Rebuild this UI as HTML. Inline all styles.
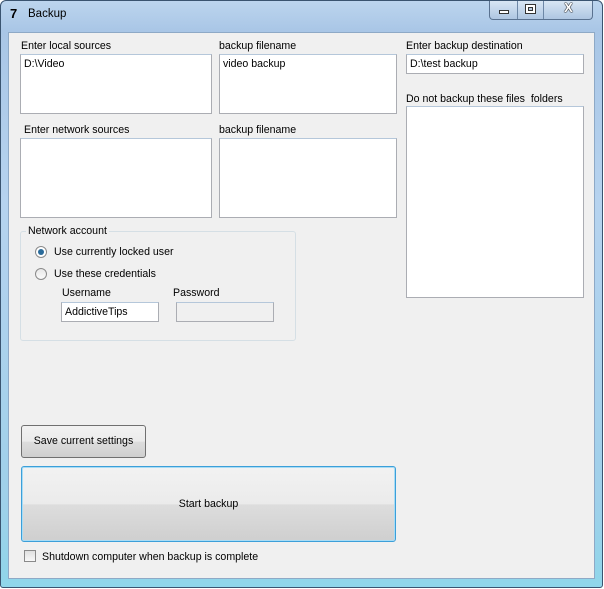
<!DOCTYPE html>
<html><head><style>
*{margin:0;padding:0;box-sizing:border-box}
body{width:604px;height:589px;background:#fff;font-family:"Liberation Sans",sans-serif;font-size:10.6px;color:#000;position:relative;overflow:hidden}
.frame{position:absolute;left:0;top:0;width:603px;height:588px;border:1px solid #3a5470;border-radius:6px 6px 3px 3px;background:linear-gradient(180deg,#bcd5ee 0,#a9c6e6 30px,#b6d3ef 200px,#9fd0ea 500px,#8fd6ea 588px)}
.client{position:absolute;left:8px;top:32px;width:587px;height:547px;background:#f0f0f0;border:1px solid #8ea9c6}
.a{position:absolute}
.tb{position:absolute;background:#fff;border:1px solid #abadb3;border-top-color:#b5c7da;padding:3px 3px;font-size:10.6px}
.lbl{position:absolute;font-size:10.6px;margin-top:1px}
.btn{position:absolute;border:1px solid #707070;border-radius:3px;background:linear-gradient(180deg,#f2f2f2 0,#ebebeb 50%,#dddddd 51%,#cfcfcf 100%);text-align:center;font-size:10.6px}
</style></head><body>
<div class="frame"></div>
<div class="a" style="left:10px;top:6px;font-weight:bold;font-size:13px">7</div>
<div class="a" style="left:28px;top:8px;font-size:11.5px">Backup</div>
<div class="a" style="left:489px;top:1px;width:104px;height:19px;border:1px solid #5a7290;border-top:none;border-radius:0 0 4px 4px;background:linear-gradient(#d8e6f4,#aec6e2)">
 <div class="a" style="left:27px;top:0;width:1px;height:18px;background:#6d87a6"></div>
 <div class="a" style="left:53px;top:0;width:1px;height:18px;background:#6d87a6"></div>
 <div class="a" style="left:9px;top:9px;width:10px;height:4px;background:#fff;border:1px solid #333"></div>
 <div class="a" style="left:35px;top:3px;width:11px;height:10px;border:1px solid #333;background:#fff"><div class="a" style="left:2px;top:2px;width:5px;height:4px;border:1px solid #333;background:#b8cbe0"></div></div>
 <div class="a" style="left:54px;top:-1px;width:49px;text-align:center;font-weight:bold;font-size:13px;color:#fff;text-shadow:0 0 1px #000,0 0 1px #000,0 0 1px #000">X</div>
</div>
<div class="client"></div>
<div class="lbl" style="left:21px;top:39px">Enter local sources</div>
<div class="lbl" style="left:219px;top:39px">backup filename</div>
<div class="lbl" style="left:406px;top:39px">Enter backup destination</div>
<div class="tb" style="left:20px;top:54px;width:192px;height:60px">D:\Video</div>
<div class="tb" style="left:219px;top:54px;width:178px;height:60px">video backup</div>
<div class="tb" style="left:406px;top:54px;width:178px;height:20px">D:\test backup</div>
<div class="lbl" style="left:406px;top:92px">Do not backup these files&nbsp; folders</div>
<div class="tb" style="left:406px;top:106px;width:178px;height:192px"></div>
<div class="lbl" style="left:24px;top:123px">Enter network sources</div>
<div class="lbl" style="left:219px;top:123px">backup filename</div>
<div class="tb" style="left:20px;top:138px;width:192px;height:80px"></div>
<div class="tb" style="left:219px;top:138px;width:178px;height:80px"></div>
<div class="a" style="left:20px;top:231px;width:276px;height:110px;border:1px solid #d5dfe5;border-radius:3px"></div>
<div class="lbl" style="left:26px;top:224px;background:#f0f0f0;padding:0 2px">Network account</div>
<div class="a" style="left:35px;top:246px;width:12px;height:12px;border-radius:50%;border:1px solid #8a8a8a;background:#fff"><div class="a" style="left:2px;top:2px;width:6px;height:6px;border-radius:50%;background:#2a6b9a"></div></div>
<div class="lbl" style="left:54px;top:245px">Use currently locked user</div>
<div class="a" style="left:35px;top:268px;width:12px;height:12px;border-radius:50%;border:1px solid #8a8a8a;background:linear-gradient(#e8e8e8,#fafafa)"></div>
<div class="lbl" style="left:54px;top:267px">Use these credentials</div>
<div class="lbl" style="left:62px;top:286px">Username</div>
<div class="lbl" style="left:173px;top:286px">Password</div>
<div class="tb" style="left:61px;top:302px;width:98px;height:20px">AddictiveTips</div>
<div class="tb" style="left:176px;top:302px;width:98px;height:20px;background:#f0f0f0"></div>
<div class="btn" style="left:21px;top:425px;width:125px;height:33px;line-height:31px">Save current settings</div>
<div class="btn" style="left:21px;top:466px;width:375px;height:76px;line-height:74px;border-color:#3c9fd9;box-shadow:inset 0 0 0 1px #a8dcf5">Start backup</div>
<div class="a" style="left:24px;top:550px;width:12px;height:12px;border:1px solid #8a8a8a;background:linear-gradient(#e0e0e0,#f8f8f8)"></div>
<div class="lbl" style="left:42px;top:550px">Shutdown computer when backup is complete</div>
</body></html>
